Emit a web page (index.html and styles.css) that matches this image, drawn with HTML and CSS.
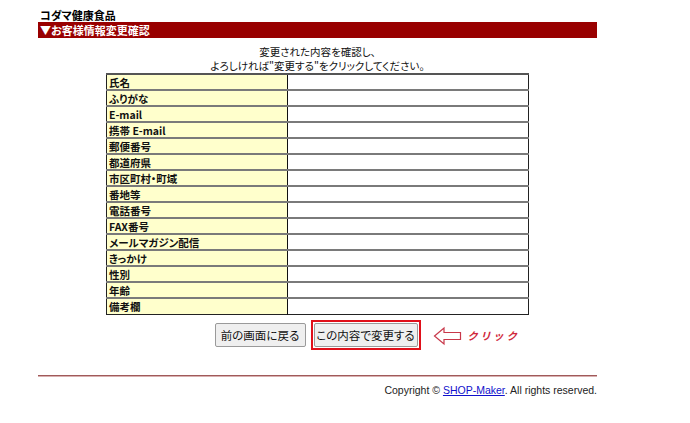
FILE: index.html
```html
<!DOCTYPE html>
<html lang="ja">
<head>
<meta charset="utf-8">
<title>お客様情報変更確認</title>
<link rel="stylesheet" href="styles.css">
</head>
<body>
<div class="page">
  <div class="shop">コダマ健康食品</div>
  <div class="bar">▼お客様情報変更確認</div>
  <p class="msg">変更された内容を確認し、<br>よろしければ"変更する"をクリックしてください。</p>
  <table class="info">
    <tr><th>氏名</th><td></td></tr>
    <tr><th>ふりがな</th><td></td></tr>
    <tr><th>E-mail</th><td></td></tr>
    <tr><th>携帯 E-mail</th><td></td></tr>
    <tr><th>郵便番号</th><td></td></tr>
    <tr><th>都道府県</th><td></td></tr>
    <tr><th>市区町村・町域</th><td></td></tr>
    <tr><th>番地等</th><td></td></tr>
    <tr><th>電話番号</th><td></td></tr>
    <tr><th>FAX番号</th><td></td></tr>
    <tr><th>メールマガジン配信</th><td></td></tr>
    <tr><th>きっかけ</th><td></td></tr>
    <tr><th>性別</th><td></td></tr>
    <tr><th>年齢</th><td></td></tr>
    <tr><th>備考欄</th><td></td></tr>
  </table>
  <div class="actions">
    <button class="btn back">前の画面に戻る</button>
    <span class="highlight">
      <button class="btn submit">この内容で変更する</button>
      <span class="note">
        <svg class="arrow" width="29" height="20" viewBox="0 0 29 20"><polygon points="1.5,10 11,2 11,6.5 27.5,6.5 27.5,13.5 11,13.5 11,18" fill="none" stroke="#c8384a" stroke-width="1.2"/></svg>
        <span class="click">クリック</span>
      </span>
    </span>
  </div>
  <div class="rule"></div>
  <div class="copy">Copyright © <a href="#">SHOP-Maker</a>. All rights reserved.</div>
</div>
</body>
</html>
```
FILE: styles.css
```css
html, body {
  margin: 0;
  padding: 0;
  background: #fff;
}
body {
  font-family: "Noto Sans CJK JP", "Liberation Sans", sans-serif;
  font-feature-settings: "palt";
  color: #000;
}
.page {
  width: 559px;
  margin-left: 38px;
  padding-top: 8px;
}
.shop {
  font-size: 11px;
  font-weight: bold;
  line-height: 14px;
  padding-left: 2px;
}
.bar {
  background: #990000;
  color: #fff;
  font-size: 11px;
  font-weight: bold;
  height: 16px;
  line-height: 16px;
  padding-left: 2px;
}
.msg {
  margin: 7px 0 0;
  text-align: center;
  font-size: 10.5px;
  line-height: 14px;
  color: #111;
}
.info {
  margin: 0 auto;
  width: 423px;
  border-collapse: collapse;
  border: 1px solid #222;
}
.info tr {
  height: 16px;
}
.info th, .info td {
  padding: 0 2px;
  border-top: 2px solid #7a7a7a;
  font-size: 10.5px;
  line-height: 13px;
  height: 14px;
}
.info tr:first-child th, .info tr:first-child td {
  border-top: 2px solid #555;
}
.info th {
  width: 176px;
  background: #ffffcc;
  text-align: left;
  font-weight: bold;
  border-right: 1px solid #111;
  color: #111;
}
.info td {
  background: #fff;
}
.actions {
  display: flex;
  justify-content: center;
  align-items: center;
  gap: 5px;
  margin-top: 5px;
}
.btn {
  font-family: "Noto Sans CJK JP", "Liberation Sans", sans-serif;
  font-feature-settings: "palt";
  font-size: 11.5px;
  height: 24px;
  padding: 0;
  background: #efefef;
  border: 1px solid #9a9a9a;
  border-radius: 2px;
  color: #111;
  line-height: 22px;
  white-space: nowrap;
}
.back {
  width: 91px;
}
.highlight {
  display: inline-flex;
  position: relative;
  border: 2px solid #e0101a;
  padding: 1px 1px;
}
.submit {
  width: 104px;
}
.note {
  position: absolute;
  left: 120px;
  top: 4px;
  display: flex;
  align-items: center;
  gap: 6px;
  white-space: nowrap;
}
.arrow {
  display: block;
}
.click {
  color: #d0283c;
  font-size: 10.5px;
  font-style: italic;
  font-weight: bold;
  letter-spacing: 4px;
}
.rule {
  margin-top: 25px;
  height: 1px;
  border-top: 1px solid #a05a5a;
  background: #d8b0b0;
}
.copy {
  margin-top: 7px;
  text-align: right;
  font-family: "Liberation Sans", Arial, sans-serif;
  font-size: 10.5px;
  color: #222;
}
.copy a {
  color: #1010cc;
  text-decoration: underline;
}
```
